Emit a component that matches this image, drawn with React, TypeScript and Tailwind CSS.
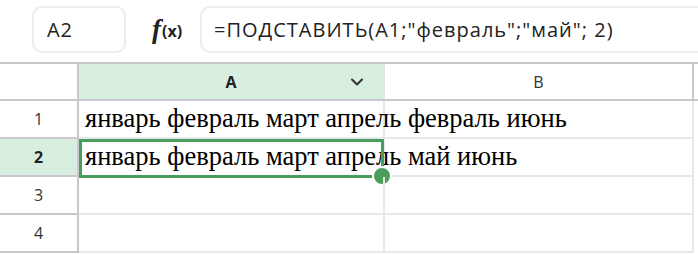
import { ChevronDown } from 'lucide-react';

const ROWS = [
  'январь февраль март апрель февраль июнь',
  'январь февраль март апрель май июнь',
  '',
  '',
];

export default function App() {
  return (
    <div className="w-[698px] h-[254px] overflow-hidden bg-white font-['Open_Sans',sans-serif] text-[#222]">
      <div className="h-[62px] flex items-start pt-[6px]">
        <div className="ml-[32px] w-[94px] h-[47px] shrink-0 border-2 border-[#ececef] rounded-[10px] flex items-center pl-[13px] text-[20px] tracking-[0.8px]">
          A2
        </div>
        <div className="ml-[26px] w-[48px] h-[47px] shrink-0 flex items-center">
          <span className="font-['Liberation_Serif',serif] italic font-bold text-[27px] leading-none">f</span>
          <span className="font-bold text-[16px] leading-none ml-[1px] mt-[3px]">(x)</span>
        </div>
        <div className="w-[560px] h-[47px] shrink-0 border-2 border-r-0 border-[#ececef] rounded-l-[10px] flex items-center pl-[12px] text-[20px] tracking-[1px] whitespace-nowrap">
          =ПОДСТАВИТЬ(A1;"февраль";"май"; 2)
        </div>
      </div>

      <div className="flex h-[39px] border-t-2 border-b-2 border-[#c8c8ce] text-[16px]">
        <div className="w-[79px] shrink-0 border-r-2 border-[#c8c8ce]" />
        <div className="w-[306px] shrink-0 border-r-2 border-[#e4e4e8] bg-[#d8efdf] flex items-center relative">
          <span className="flex-1 text-center font-bold">A</span>
          <ChevronDown size={20} strokeWidth={2.5} className="absolute right-[16px] text-[#333]" />
        </div>
        <div className="w-[309px] shrink-0 border-r-2 border-[#c8c8ce] flex items-center justify-center text-[#333]">B</div>
      </div>

      {ROWS.map((text, i) => {
        const selected = i === 1;
        return (
          <div key={i} className="flex h-[38px]">
            <div
              className={
                selected
                  ? 'w-[79px] shrink-0 border-r-2 border-b-2 border-[#c8c8ce] bg-[#d8efdf] flex items-center justify-center text-[16px] font-bold'
                  : 'w-[79px] shrink-0 border-r-2 border-b-2 border-[#c8c8ce] flex items-center justify-center text-[16px] text-[#333]'
              }
            >
              {i + 1}
            </div>
            <div className="w-[306px] shrink-0 border-r-2 border-b-2 border-[#e8e8ea] relative flex items-center pl-[6px] z-10">
              <span className="whitespace-nowrap font-['Liberation_Serif',serif] text-[26.5px] text-black">{text}</span>
              {selected && (
                <div className="absolute left-0 top-0 w-[305px] h-[39px] border-[3px] border-[#4b9d5b]">
                  <div className="absolute right-[-11px] bottom-[-11px] w-[20px] h-[20px] rounded-full bg-[#4b9d5b] border-2 border-white" />
                </div>
              )}
            </div>
            <div className="w-[309px] shrink-0 border-r-2 border-b-2 border-[#e8e8ea]" />
          </div>
        );
      })}
    </div>
  );
}
